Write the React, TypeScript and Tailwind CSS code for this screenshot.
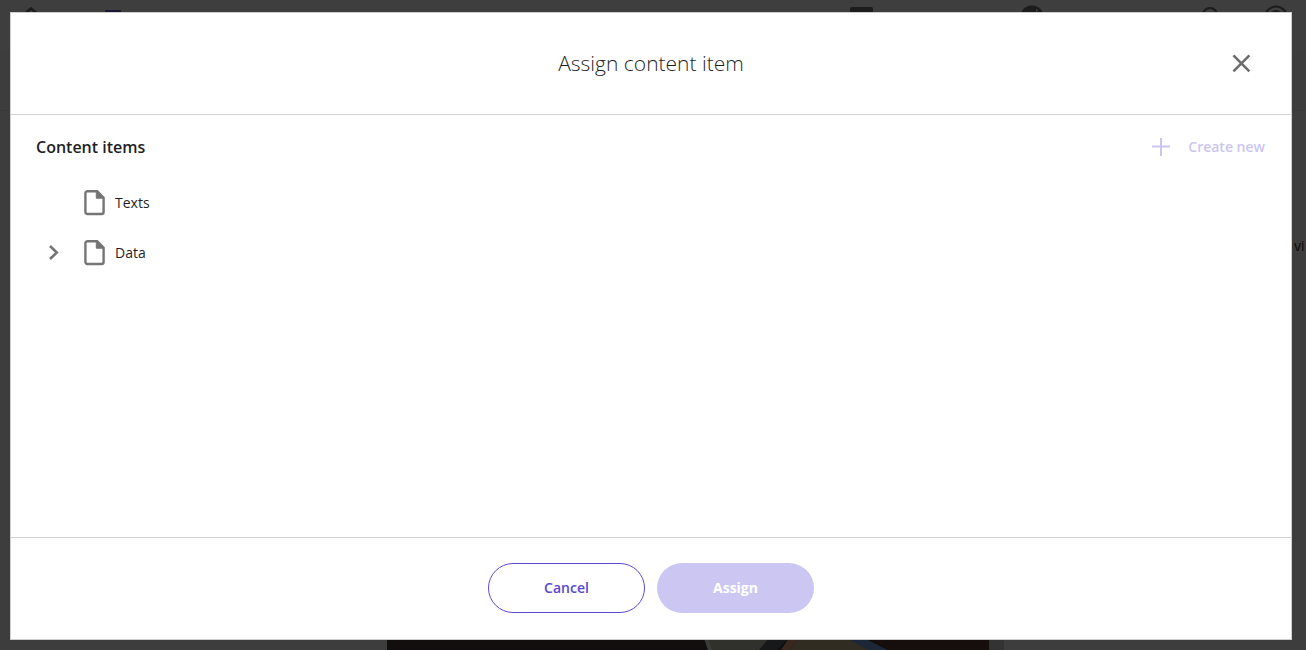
import React from "react";

const FONT = "font-['Segoe_UI','Open_Sans','Noto_Sans',sans-serif]";

function FileIcon() {
  return (
    <svg width="21" height="26" viewBox="0 0 21 26" aria-hidden="true" className="shrink-0">
      <path d="M3.200 1.200h10L19.600 7.700v14.300a2 2 0 0 1-2 2H3.400a2 2 0 0 1-2-2V3.200a2 2 0 0 1 2-2z" fill="#fff" stroke="#757575" strokeWidth="2.400" />
      <path d="M12.300 1.200v7h7.300z" fill="#757575" stroke="#757575" strokeWidth="1" />
    </svg>
  );
}

function TreeItem({ label, expandable }: { label: string; expandable?: boolean }) {
  return (
    <li className="flex h-[50px] items-center">
      <div className="flex w-12 shrink-0 items-center">
        {expandable && (
          <button type="button" aria-label={`Expand ${label}`} className="flex h-9 w-9 items-center justify-center">
            <svg width="12" height="16" viewBox="0 0 12 16" fill="none" stroke="#757575" strokeWidth="2.600">
              <path d="M2 1 8.800 7.500 2 14" />
            </svg>
          </button>
        )}
      </div>
      <button type="button" className="flex items-center gap-[10px] text-sm text-[#1f1f1f]">
        <FileIcon />
        <span>{label}</span>
      </button>
    </li>
  );
}

function PageBehind() {
  return (
    <div aria-hidden="true" className="absolute inset-0 flex flex-col overflow-hidden bg-[#3b3b3b]">
      <div className="flex h-[50px] shrink-0 items-start bg-[#3e3e3e] shadow-[0_1px_4px_#333333]">
        <div className="flex grow items-start gap-[62px] pt-[5px] pl-[19px]">
          <svg width="24" height="24" viewBox="0 0 24 24" fill="none" stroke="#1c1c1c" strokeWidth="2.500">
            <path d="M2 12 12 3.500 22 12M5 11v10h14V11" />
          </svg>
          <svg width="16" height="24" viewBox="0 0 16 24">
            <rect y="5" width="16" height="16" rx="1" fill="#1a1730" />
          </svg>
        </div>
        <div className="flex items-start pt-[5px] pr-[18px]">
          <svg width="24" height="24" viewBox="0 0 24 24" className="mr-[147px]">
            <rect y="2" width="23" height="18" rx="2" fill="#1c1c1c" />
          </svg>
          <svg width="24" height="24" viewBox="0 0 24 24" className="mr-[154px]">
            <circle cx="11" cy="12.500" r="12" fill="#1c1c1c" />
            <path d="M15 4l2 .5-2 4z" fill="#3e3e3e" />
          </svg>
          <svg width="24" height="24" viewBox="0 0 24 24" fill="none" stroke="#1c1c1c" strokeWidth="2.200" className="mr-[41px]">
            <circle cx="11" cy="10" r="7" />
            <path d="m16 15 5 6" />
          </svg>
          <svg width="24" height="24" viewBox="0 0 24 24" fill="none" stroke="#1c1c1c" strokeWidth="2">
            <circle cx="12" cy="12.500" r="11" />
            <circle cx="12" cy="11" r="5" />
          </svg>
        </div>
      </div>
      <div className="h-[61px] shrink-0 border-b border-[#383838] bg-[#3d3d3d]" />
      <div className="flex grow flex-col items-end bg-[#3d3d3d] pt-[125px]">
        <p className="w-3 overflow-hidden text-sm whitespace-nowrap text-[#0a0a0a]">vi</p>
      </div>
      <div className="flex h-10 shrink-0 justify-center bg-[#3d3d3d] pl-[85px]">
        <svg width="602" height="40" viewBox="0 0 602 40" className="shrink-0">
          <rect width="602" height="40" fill="#110e0d" />
          <path d="M317 28h70l-10 12h-56z" fill="#30302c" />
          <path d="M317 28h4l4 12h-4z" fill="#3a3c39" />
          <path d="M382 28h20l-12 12h-18z" fill="#171819" />
          <path d="M402 28h9l-8 12h-9z" fill="#38281e" />
          <path d="M411 28h56l34 12h-98z" fill="#312c22" />
          <path d="M459 28h18l24 12h-20z" fill="#1c2837" />
          <path d="M477 28h125v12H501z" fill="#150e0d" />
        </svg>
        <div className="w-[15px] shrink-0 bg-[#333333]" />
      </div>
    </div>
  );
}

export default function App() {
  return (
    <div className={`relative flex h-screen min-h-[400px] flex-col ${FONT}`}>
      <PageBehind />
      <div
        role="dialog"
        aria-modal="true"
        aria-labelledby="dialog-title"
        className="relative mt-3 mr-[14px] mb-[10px] ml-[10px] flex grow flex-col border border-[#cfcfcf] bg-white"
      >
        <header className="grid h-[102px] shrink-0 grid-cols-[1fr_auto_1fr] items-center border-b border-[#d3d3d3] px-8">
          <h1 id="dialog-title" className="col-start-2 text-[21px] font-light text-[#1f1f1f]">
            Assign content item
          </h1>
          <button type="button" aria-label="Close" className="flex h-9 w-9 items-center justify-center justify-self-end">
            <svg width="20" height="20" viewBox="0 0 20 20" fill="none" stroke="#6b6b6b" strokeWidth="2.500">
              <path d="M2.400 1.400l16 16M18.400 1.400l-16 16" />
            </svg>
          </button>
        </header>

        <main className="flex grow flex-col pt-[14px] pr-[26px] pl-[25px]">
          <div className="flex h-9 items-center justify-between">
            <h2 className="text-base font-semibold text-[#1f1f1f]">Content items</h2>
            <button type="button" disabled className="flex items-center gap-[18px] text-sm font-semibold text-[#cbc6f1]">
              <svg width="18" height="18" viewBox="0 0 18 18" fill="none" stroke="currentColor" strokeWidth="2">
                <path d="M9 0v18M0 8.500h18" />
              </svg>
              Create new
            </button>
          </div>
          <ul className="pt-[13px]">
            <TreeItem label="Texts" />
            <TreeItem label="Data" expandable />
          </ul>
        </main>

        <footer className="flex h-[102px] shrink-0 items-start justify-center gap-3 border-t border-[#d3d3d3] pt-[25px]">
          <button type="button" className="h-[50px] w-[157px] rounded-full border border-[#5948d3] text-sm font-semibold text-[#5948d3]">
            Cancel
          </button>
          <button type="button" disabled className="h-[50px] w-[157px] rounded-full bg-[#cbc7f2] text-sm font-bold text-white">
            Assign
          </button>
        </footer>
      </div>
    </div>
  );
}
